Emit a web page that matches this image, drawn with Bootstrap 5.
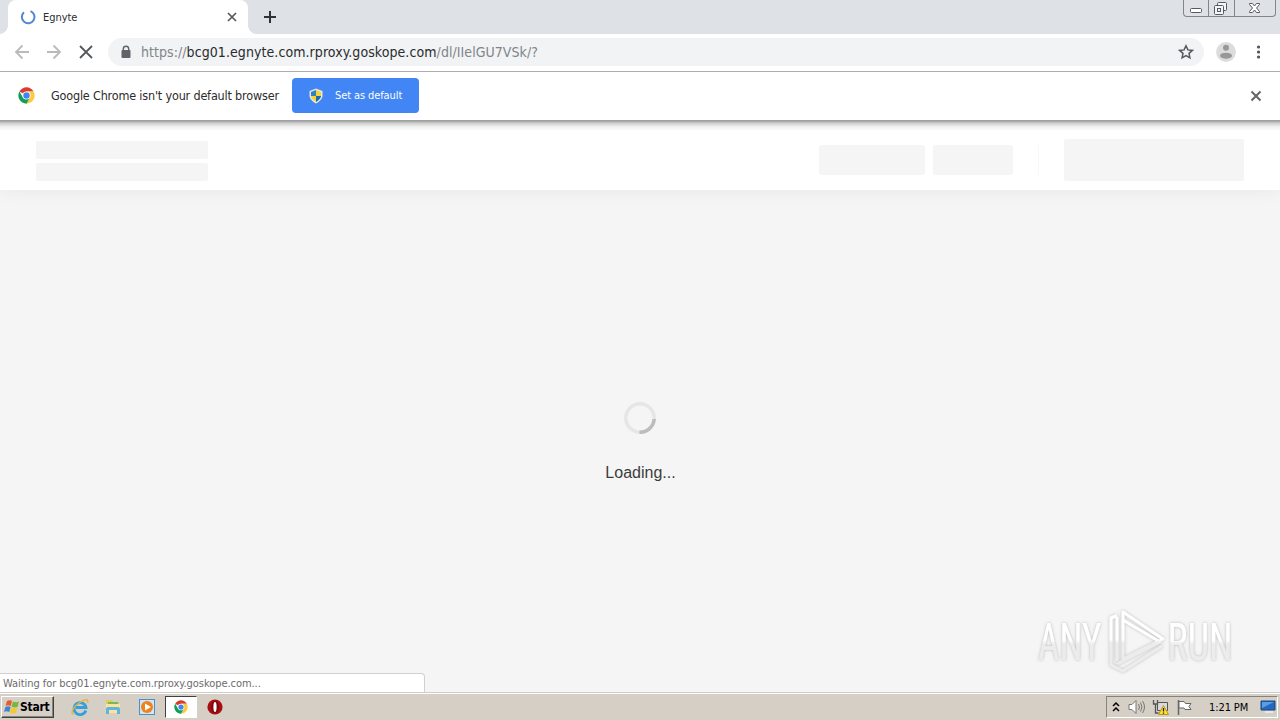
<!DOCTYPE html>
<html lang="en">
<head>
    <meta charset="UTF-8">
    <title>Egnyte</title>
    <meta name="viewport" content="width=device-width, initial-scale=1">

    <!-- Bootstrap CSS -->
    <link href="https://cdn.jsdelivr.net/npm/bootstrap@5.3.2/dist/css/bootstrap.min.css" rel="stylesheet">

    <style>
        body {
            width: 1280px;
            height: 720px;
            font-family: "DejaVu Sans Condensed", "DejaVu Sans", sans-serif;
            font-stretch: condensed;
            font-size: 11px;
            line-height: 16px;
            color: #2c2c2c;
            background: #f5f5f5;
        }

        svg {
            display: block;
            flex: none;
        }

        /* Tab strip */
        .tab-strip {
            height: 34px;
            background: #dee1e6;
            padding-left: 8px;
        }

        .browser-tab {
            position: relative;
            width: 240px;
            height: 34px;
            background: #fff;
            border-radius: 8px 8px 0 0;
            padding: 0 10px 0 12px;
        }

        .browser-tab::before,
        .browser-tab::after {
            content: "";
            position: absolute;
            bottom: 0;
            width: 8px;
            height: 8px;
        }

        .browser-tab::before {
            left: -8px;
            background: radial-gradient(circle at 0 0, #dee1e6 7.5px, #fff 8px);
        }

        .browser-tab::after {
            right: -8px;
            background: radial-gradient(circle at 100% 0, #dee1e6 7.5px, #fff 8px);
        }

        .tab-title { margin-left: 7px; padding-top: 1px; letter-spacing: -.05px; }

        .window-buttons {
            width: 93px;
            height: 17px;
            margin-right: 4px;
            border: 1px solid #80858e;
            border-top: 0;
            border-radius: 0 0 4px 4px;
        }

        .window-buttons > div + div { border-left: 1px solid #80858e; }

        /* Toolbar */
        .toolbar {
            height: 38px;
            background: #fff;
            border-bottom: 1px solid #adadb2;
            padding: 0 14px 1px 14px;
        }

        .omnibox {
            width: 1096px;
            height: 28px;
            margin-left: 14px;
            border-radius: 14px;
            background: #f1f3f4;
            padding: 0 10px 0 12px;
        }

        .url {
            margin-left: 9px;
            font-size: 14px;
            letter-spacing: .055px;
            color: #80858a;
            white-space: nowrap;
        }

        .url b { font-weight: 400; color: #2a2b2e; letter-spacing: .075px; }

        /* Default browser bar */
        .infobar {
            height: 49px;
            background: #fff;
            border-bottom: 1px solid #a0a0a0;
            padding: 0 18px 1px 18px;
        }

        .infobar-text {
            width: 241px;
            margin-left: 17px;
            font-size: 12.5px;
            letter-spacing: -.18px;
            white-space: nowrap;
        }

        .btn-default-browser {
            width: 127px;
            height: 35px;
            border-radius: 4px;
            background: #4285f4;
            color: #fff;
            font-size: 11px;
            padding: 0 0 0 17px;
        }

        /* Page */
        .page-header {
            height: 69px;
            background: linear-gradient(#999 0, #bbb 1px, #ccc 2px, #e0e0e0 4px, #f2f2f2 6px, #fafafa 9px, #fff 9px);
            box-shadow: 0 0 18px rgba(0, 0, 0, .06);
            clip-path: inset(0 0 -30px 0);
            padding: 8px 36px 0;
        }

        .skeleton { background: #f5f5f5; border-radius: 2px; }
        .sk-line { width: 172px; height: 18px; }
        .sk-link { height: 30px; }
        .sk-user { width: 180px; height: 42px; }
        .sk-rule { width: 1px; height: 30px; background: #f8f8f8; margin: 0 25px; }

        .page-main { height: 502px; position: relative; }

        .loader { padding-top: 212px; }

        .loading-text {
            margin-top: 29px;
            padding-left: 1px;
            font: 16px/20px "Liberation Sans", Arial, sans-serif;
            color: #3c3c3c;
        }

        .watermark { position: absolute; left: 1030px; top: 414px; }

        .status-bubble {
            position: absolute;
            left: 0;
            bottom: 0;
            width: 425px;
            height: 19px;
            background: #fff;
            border: 1px solid #d0d0d0;
            border-left: 0;
            border-bottom: 0;
            border-radius: 0 4px 0 0;
            padding: 2px 3px 0;
            color: #6c6c6c;
            letter-spacing: -.06px;
        }

        /* Taskbar */
        .taskbar {
            height: 28px;
            background: #d5cfc6;
            border-top: 1px solid #d0ccc6;
            box-shadow: inset 0 1px #fff;
            padding: 1px 2px 0 1px;
        }

        .start-btn {
            width: 53px;
            height: 22px;
            border: 1px solid;
            border-color: #fff #404040 #404040 #fff;
            box-shadow: inset -1px -1px #87827b;
            font-weight: 700;
            font-size: 12px;
            letter-spacing: -.25px;
            color: #000;
            padding-left: 2px;
        }

        .task-active {
            width: 32px;
            height: 22px;
            background: #fff;
            border: 1px solid;
            border-color: #404040 #fff #fff #404040;
        }

        .tray {
            width: 172px;
            height: 22px;
            border: 1px solid;
            border-color: #87827b #fff #fff #87827b;
            color: #000;
            padding-left: 5px;
        }
    </style>
</head>
<body class="overflow-hidden">

    <svg width="0" height="0" class="position-absolute">
        <defs>
            <symbol id="chrome" viewBox="0 0 48 48">
                <circle cx="24" cy="24" r="23" fill="#fff"/>
                <path d="M24 24 4.1 12.5A23 23 0 0 1 43.9 12.5H24Z" fill="#db3b2c"/>
                <path d="M24 12.5H43.9A23 23 0 0 1 24 47L34 29.700Z" fill="#fccb3c"/>
                <path d="M4.100 12.500A23 23 0 0 0 24 47L34 29.700 24 24 14 29.700Z" fill="#109d58"/>
                <circle cx="24" cy="24" r="11.500" fill="#fff"/>
                <circle cx="24" cy="24" r="9" fill="#4385f0"/>
            </symbol>
        </defs>
    </svg>

    <!-- Tabs -->
    <div class="tab-strip d-flex">
        <div class="browser-tab d-flex align-items-center">
            <svg width="16" height="16" viewBox="0 0 16 16"><path d="M10.500 2.100A6.300 6.300 0 1 1 4 3.200" fill="none" stroke="#5484d4" stroke-width="2"/></svg>
            <span class="tab-title flex-grow-1">Egnyte</span>
            <svg width="12" height="12" viewBox="0 0 12 12"><path d="m2 2 8 8m0-8-8 8" stroke="#55585c" stroke-width="1.700"/></svg>
        </div>
        <svg width="14" height="14" viewBox="0 0 14 14" style="margin: 10px 0 0 15px"><path d="M7 1v12M1 7h12" stroke="#303236" stroke-width="2"/></svg>
        <div class="window-buttons d-flex ms-auto">
            <div style="width: 24px"><svg width="24" height="16"><rect x="6.500" y="8.500" width="11" height="4" rx="1" fill="#fff" stroke="#555a65"/></svg></div>
            <div style="width: 26px"><svg width="24" height="16" fill="#f4f5f7" stroke="#555a65"><rect x="8.500" y="2.500" width="9" height="8" rx="1"/><rect x="5.500" y="5.500" width="9" height="9" rx="1"/><rect x="8.500" y="8.500" width="3" height="3"/></svg></div>
            <div class="flex-grow-1"><svg width="40" height="16"><path d="M14.500 3.500h3l2 2.500 2-2.500h3v1l-3 3.500 3 3.500v1h-3l-2-2.500-2 2.500h-3v-1l3-3.500-3-3.500z" fill="#fff" stroke="#555a65"/></svg></div>
        </div>
    </div>

    <!-- Address bar -->
    <div class="toolbar d-flex align-items-center">
        <svg width="16" height="16" fill="none" stroke="#b8babc" stroke-width="1.800"><path d="M15 8H2M8.500 1.500 2 8l6.500 6.500"/></svg>
        <svg width="16" height="16" fill="none" stroke="#b8babc" stroke-width="1.800" style="margin-left: 16px"><path d="M1 8h13M7.500 1.500 14 8l-6.500 6.500"/></svg>
        <svg width="16" height="16" stroke="#55585c" stroke-width="1.800" style="margin-left: 16px"><path d="m2 2 12 12m0-12L2 14"/></svg>
        <div class="omnibox d-flex align-items-center">
            <svg width="12" height="14" viewBox="0 0 12 14"><path d="M3.300 6V4a2.700 2.700 0 0 1 5.400 0v2" fill="none" stroke="#5f6368" stroke-width="1.400"/><rect x="1.500" y="5" width="9" height="8" rx="1" fill="#5f6368"/></svg>
            <div class="url flex-grow-1">https://<b>bcg01.egnyte.com.rproxy.goskope.com</b>/dl/IIelGU7VSk/?</div>
            <svg width="16" height="16" viewBox="0 0 16 16"><path d="m8 1.800 1.900 4.100 4.500.5-3.400 3 .9 4.400L8 11.600l-3.900 2.200.9-4.400-3.400-3 4.500-.5z" fill="none" stroke="#55585c" stroke-width="1.500"/></svg>
        </div>
        <svg width="20" height="20" viewBox="0 0 20 20" style="margin-left: 12px"><circle cx="10" cy="10" r="9.900" fill="#dcdcdc"/><circle cx="10" cy="5.800" r="3" fill="#989898"/><ellipse cx="10" cy="13.700" rx="6" ry="3" fill="#989898"/></svg>
        <svg width="4" height="16" fill="#55585c" style="margin-left: 20px"><circle cx="2.500" cy="3" r="1.600"/><circle cx="2.500" cy="8" r="1.600"/><circle cx="2.500" cy="13" r="1.600"/></svg>
    </div>

    <!-- Default browser bar -->
    <div class="infobar d-flex align-items-center">
        <svg width="17" height="17" style="margin-right: -1px"><use href="#chrome"/></svg>
        <div class="infobar-text">Google Chrome isn't your default browser</div>
        <button type="button" class="btn btn-default-browser d-flex align-items-center border-0">
            <svg width="14" height="16" viewBox="0 0 14 16"><path d="M7 .5 13.500 3v4.500c0 3.500-3 6-6.500 8-3.500-2-6.500-4.500-6.500-8V3z" fill="#e5e8df"/><path d="M7 2v6H2V4z" fill="#327fc3"/><path d="M7 2v6h5V4z" fill="#f5d33b"/><path d="M7 8v6C4 12 2 10 2 8z" fill="#f5d33b"/><path d="M7 8v6c3-2 5-4 5-6z" fill="#1e68ab"/></svg>
            <span style="margin-left: 12px; padding-top: 1px; letter-spacing: -.1px">Set as default</span>
        </button>
        <svg width="12" height="12" class="ms-auto"><path d="m1.500 1.500 9 9m0-9-9 9" stroke="#606367" stroke-width="1.900"/></svg>
    </div>

    <!-- Page header placeholders -->
    <div class="page-header d-flex align-items-center">
        <div class="d-flex flex-column" style="gap: 4px; padding-top: 3px">
            <div class="skeleton sk-line"></div>
            <div class="skeleton sk-line"></div>
        </div>
        <div class="skeleton sk-link ms-auto" style="width: 106px"></div>
        <div class="skeleton sk-link ms-2" style="width: 80px"></div>
        <div class="sk-rule"></div>
        <div class="skeleton sk-user"></div>
    </div>

    <main class="page-main">
        <div class="loader d-flex flex-column align-items-center">
            <svg width="32" height="32" fill="none" stroke-width="3.500"><circle cx="16" cy="16" r="14.200" stroke="#e6e6e6"/><path d="M30.200 17A14.200 14.200 0 0 1 15.500 30.200" stroke="#bcbcbc"/></svg>
            <div class="loading-text">Loading...</div>
        </div>

        <svg class="watermark" width="215" height="80" viewBox="0 0 215 80">
            <defs>
                <linearGradient id="fade" gradientUnits="userSpaceOnUse" x1="0" y1="0" x2="0" y2="80"><stop offset=".44" stop-color="#fff"/><stop offset=".49" stop-color="#ececec"/></linearGradient>
                <!-- text is drawn from its baseline, 55 below the top -->
                <linearGradient id="textFade" gradientUnits="userSpaceOnUse" x1="0" y1="-55" x2="0" y2="25"><stop offset=".44" stop-color="#fff"/><stop offset=".49" stop-color="#ececec"/></linearGradient>
                <filter id="glow" x="-10%" y="-20%" width="120%" height="140%"><feDropShadow dx="0" dy="0" stdDeviation="1.800" flood-color="#777" flood-opacity=".5"/></filter>
            </defs>
            <g filter="url(#glow)">
                <g fill="url(#textFade)" font-family="Roboto, sans-serif" font-size="51">
                    <text transform="translate(8 56) scale(.73 1)">ANY</text>
                    <text transform="translate(137.500 56) scale(.745 1)">RUN</text>
                </g>
                <g fill="none" stroke="url(#fade)" stroke-width="3" stroke-linejoin="round">
                    <path d="M93 8v47l40-20z"/>
                    <path d="M87 11.500 81 14v47l12 6 39-25"/>
                    <path d="M87 13v44M93 16l37 22-43 22"/>
                </g>
            </g>
        </svg>

        <div class="status-bubble">Waiting for bcg01.egnyte.com.rproxy.goskope.com...</div>
    </main>

    <!-- Taskbar -->
    <div class="taskbar d-flex align-items-center">
        <div class="start-btn d-flex align-items-center">
            <svg width="16" height="16" viewBox="0 0 16 16"><path d="M3 2q3-1.500 5 0L6.800 7q-3-1.300-5.200 0z" fill="#e95a25"/><path d="M9 2.500q3 1.500 6 0L13.500 8q-3 1-6-.5z" fill="#76b83d"/><path d="M1.400 8q3-1.300 5.200 0l-1.300 5q-3-1.300-5.200 0z" fill="#3f83d3"/><path d="M7.300 8.500q3 1.500 6 .3L12 14q-3 1.200-6-.5z" fill="#f7c82e"/></svg>
            <span>Start</span>
        </div>
        <!-- Internet Explorer -->
        <svg width="18" height="18" viewBox="0 0 18 18" style="margin-left: 17px"><path d="M14.800 12.500A6 6 0 1 1 15 9.500H5" fill="none" stroke="#35a0dc" stroke-width="2.800"/><path d="M2.500 16C-1 16 2 9 8 5s10-4.500 8.500 0" fill="none" stroke="#e2b63c" stroke-width="1.400"/></svg>
        <!-- Explorer -->
        <svg width="18" height="18" viewBox="0 0 18 18" style="margin-left: 15px"><path d="M2 2h6l1 2h6v10H2z" fill="#e7c85c"/><path d="M4 4h10v2H4z" fill="#77b957"/><path d="M2 6h14v9H2z" fill="#f8e49a"/><path d="M2 16v-5q0-2 2-2h10q2 0 2 2v5h-3v-4H5v4z" fill="#63b3df"/></svg>
        <!-- Media player -->
        <svg width="18" height="18" viewBox="0 0 18 18" style="margin-left: 16px"><rect x="1.500" y="1.500" width="15" height="15" fill="#cfe5f8" stroke="#4a90ca"/><circle cx="9" cy="9" r="6" fill="#ef8318"/><path d="m7 5.500 6 3.500-6 3.500z" fill="#fff"/></svg>
        <div class="task-active d-flex align-items-center justify-content-center" style="margin-left: 9px">
            <svg width="14" height="14"><use href="#chrome"/></svg>
        </div>
        <!-- Opera -->
        <svg width="16" height="16" viewBox="0 0 16 16" style="margin-left: 10px"><circle cx="8" cy="8" r="7.600" fill="#a90d13"/><ellipse cx="8" cy="8" rx="4" ry="6" fill="#7d090d"/><ellipse cx="8" cy="8" rx="1.600" ry="5" fill="#fff"/></svg>

        <div class="tray d-flex align-items-center ms-auto">
            <svg width="8" height="12" fill="none" stroke="#000" stroke-width="1.500"><path d="m1 5 3-3 3 3M1 10l3-3 3 3"/></svg>
            <svg width="18" height="16" viewBox="0 0 18 16" style="margin-left: 8px"><path d="M1 5.500h3L8 1.500v13l-4-4H1z" fill="#fff" stroke="#777"/><path d="M10.500 5q2 3 0 6M12.500 3.500q3 4.500 0 9M14.500 2q4 6 0 12" fill="none" stroke="#777"/></svg>
            <svg width="18" height="18" viewBox="0 0 18 18" style="margin-left: 6px"><path d="M5.500 4.500h10v8h-10zM7 15h6" fill="#d7dade" stroke="#555"/><path d="M1.500 2v4h4V2M3.500 6v9h3" fill="none" stroke="#555" stroke-width="1.300"/><path d="m11.500 7.500 5 9h-10z" fill="#ffe035" stroke="#bc9915"/><path d="M11.500 10v3.500m0 1v1.200" stroke="#222" stroke-width="1.300"/></svg>
            <svg width="17" height="17" viewBox="0 0 17 17" style="margin-left: 6px"><path d="M2.500 1v15" stroke="#666" stroke-width="1.500"/><path d="M3 2.500h5l1.500 2H15l-2 3 2 3H9l-1-1.500H3z" fill="#fff" stroke="#666"/></svg>
            <span class="text-nowrap" style="margin-left: 16px; padding-top: 1px; width: 49px; letter-spacing: -.1px">1:21 PM</span>
            <svg width="16" height="16" viewBox="0 0 16 16" style="margin-left: 2px"><path d="M1 2h14v9H1z" fill="#2469bd" stroke="#174881"/><path d="M2 3h12L2 9z" fill="#5c9ee3"/><path d="M5 13h8" stroke="#e8e8e8" stroke-width="2"/></svg>
        </div>
    </div>

    <script src="https://cdn.jsdelivr.net/npm/bootstrap@5.3.2/dist/js/bootstrap.bundle.min.js"></script>
</body>
</html>
